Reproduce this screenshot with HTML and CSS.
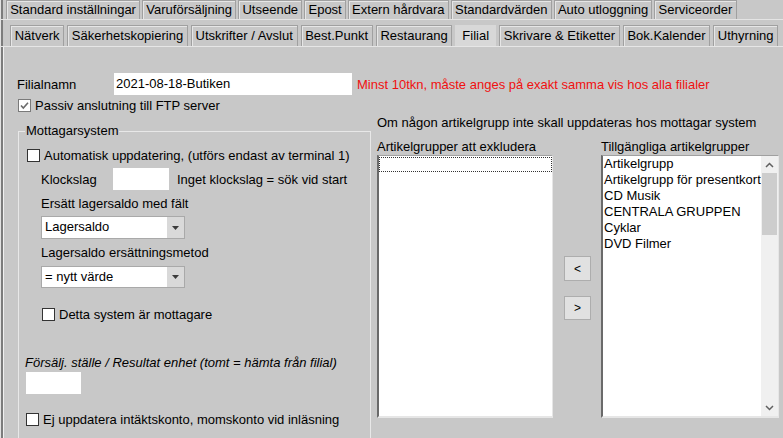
FILE: index.html
```html
<!DOCTYPE html>
<html lang="sv">
<head>
<meta charset="utf-8">
<title>Filial</title>
<link rel="stylesheet" href="styles.css">
</head>
<body>
<div class="frame">
  <div class="tabs tabs1">
    <span class="tab">Standard inställningar</span>
    <span class="tab">Varuförsäljning</span>
    <span class="tab">Utseende</span>
    <span class="tab">Epost</span>
    <span class="tab">Extern hårdvara</span>
    <span class="tab">Standardvärden</span>
    <span class="tab">Auto utloggning</span>
    <span class="tab">Serviceorder</span>
  </div>
  <div class="tabs tabs2">
    <span class="tab">Nätverk</span>
    <span class="tab">Säkerhetskopiering</span>
    <span class="tab">Utskrifter / Avslut</span>
    <span class="tab">Best.Punkt</span>
    <span class="tab">Restaurang</span>
    <span class="tab active">Filial</span>
    <span class="tab">Skrivare &amp; Etiketter</span>
    <span class="tab">Bok.Kalender</span>
    <span class="tab">Uthyrning</span>
  </div>
  <div class="content">
    <div class="name-row">
      <span class="name-label">Filialnamn</span>
      <div class="field name-field">2021-08-18-Butiken</div>
      <span class="warn">Minst 10tkn, måste anges på exakt samma vis hos alla filialer</span>
    </div>
    <div class="main">
      <div class="left">
        <div class="check-row ftp">
          <span class="cb checked"><svg width="11" height="11" viewBox="0 0 11 11"><path d="M2 5.5 L4.3 8 L9 2.8" fill="none" stroke="#6b6b6b" stroke-width="1.6"/></svg></span>
          <span>Passiv anslutning till FTP server</span>
        </div>
        <fieldset class="group">
          <legend>Mottagarsystem</legend>
          <div class="check-row auto">
            <span class="cb"></span>
            <span>Automatisk uppdatering, (utförs endast av terminal 1)</span>
          </div>
          <div class="indent">
            <div class="clock-row">
              <span class="clock-label">Klockslag</span>
              <div class="field clock-field"></div>
              <span>Inget klockslag = sök vid start</span>
            </div>
            <div class="caption cap1">Ersätt lagersaldo med fält</div>
            <div class="select sel1"><span class="select-text">Lagersaldo</span><span class="select-arrow"><svg width="7" height="4" viewBox="0 0 7 4"><path d="M0 0 H7 L3.5 4 Z" fill="#3c3c3c"/></svg></span></div>
            <div class="caption cap2">Lagersaldo ersättningsmetod</div>
            <div class="select sel2"><span class="select-text">= nytt värde</span><span class="select-arrow"><svg width="7" height="4" viewBox="0 0 7 4"><path d="M0 0 H7 L3.5 4 Z" fill="#3c3c3c"/></svg></span></div>
            <div class="check-row receiver">
              <span class="cb"></span>
              <span>Detta system är mottagare</span>
            </div>
          </div>
          <div class="italic-cap">Försälj. ställe / Resultat enhet (tomt = hämta från filial)</div>
          <div class="field unit-field"></div>
          <div class="check-row noupdate">
            <span class="cb"></span>
            <span>Ej uppdatera intäktskonto, momskonto vid inläsning</span>
          </div>
        </fieldset>
      </div>
      <div class="right">
        <div class="hint">Om någon artikelgrupp inte skall uppdateras hos mottagar system</div>
        <div class="lists">
          <div class="list-col">
            <div class="list-label">Artikelgrupper att exkludera</div>
            <div class="listbox">
              <div class="focus-item"></div>
            </div>
          </div>
          <div class="btn-col">
            <button class="btn btn-left" type="button">&lt;</button>
            <button class="btn btn-right" type="button">&gt;</button>
          </div>
          <div class="list-col">
            <div class="list-label">Tillgängliga artikelgrupper</div>
            <div class="listbox avail">
              <ul class="items">
                <li>Artikelgrupp</li>
                <li>Artikelgrupp för presentkort</li>
                <li>CD Musik</li>
                <li>CENTRALA GRUPPEN</li>
                <li>Cyklar</li>
                <li>DVD Filmer</li>
              </ul>
              <div class="scrollbar">
                <span class="sb-arrow"><svg width="9" height="6" viewBox="0 0 9 6"><path d="M1 5 L4.5 1.5 L8 5" fill="none" stroke="#606060" stroke-width="1.5"/></svg></span>
                <span class="sb-thumb"></span>
                <span class="sb-space"></span>
                <span class="sb-arrow"><svg width="9" height="6" viewBox="0 0 9 6"><path d="M1 1 L4.5 4.5 L8 1" fill="none" stroke="#606060" stroke-width="1.5"/></svg></span>
              </div>
            </div>
          </div>
        </div>
      </div>
    </div>
  </div>
</div>
</body>
</html>
```
FILE: styles.css
```css
* { box-sizing: border-box; }

html, body {
  margin: 0;
  padding: 0;
}

body {
  width: 783px;
  height: 438px;
  overflow: hidden;
  background: #c8c8c8;
  font-family: "Liberation Sans", Arial, sans-serif;
  font-size: 13px;
  color: #000;
}

.frame {
  height: 438px;
  display: flex;
  flex-direction: column;
  border-left: 1px solid #e2e2e2;
  box-shadow: inset 2px 0 #7c7c7c;
}

.tabs {
  display: flex;
  white-space: nowrap;
}

.tabs1 {
  height: 20px;
  gap: 2px;
  padding-left: 5px;
  border-bottom: 1px solid #e4e4e4;
}

.tabs2 {
  height: 27px;
  gap: 3px;
  padding-left: 9px;
  padding-top: 5px;
  border-bottom: 1px solid #e6e6e6;
}

.tab {
  display: block;
  padding: 0 3.2px;
  line-height: 18px;
  border: 1px solid #a0a0a0;
  border-bottom: none;
  box-shadow: inset 1px 1px #e6e6e6;
  background: #c8c8c8;
}

.tabs2 .tab {
  line-height: 20px;
  height: 21px;
  padding: 0 3.7px;
}

.tabs2 .tab.active {
  background: #d8d8d8;
  border-color: #d8d8d8;
  box-shadow: none;
  padding: 0 6px;
}

.content {
  flex: 1;
  padding: 26px 0 0 13px;
  border-left: 1px solid #f0f0f0;
  margin-left: 2px;
}

.name-row {
  display: flex;
  align-items: center;
  height: 22px;
}

.name-label {
  width: 97px;
}

.field {
  background: #fff;
  height: 22px;
  line-height: 22px;
}

.name-field {
  width: 238px;
  padding-left: 2px;
}

.warn {
  color: #f01010;
  margin-left: 5px;
}

.main {
  display: flex;
  margin-top: 2px;
}

.left {
  width: 357px;
  flex: none;
}

.check-row {
  display: flex;
  align-items: center;
  height: 16px;
}

.cb {
  width: 13px;
  height: 13px;
  flex: none;
  background: #fff;
  border: 1px solid #333;
  margin-right: 4px;
  display: flex;
  align-items: center;
  justify-content: center;
}

.cb.checked {
  border-color: #7a7a7a;
}

.ftp {
  padding-left: 1px;
}

.group {
  margin: 10px 0 0 1px;
  width: 353px;
  height: 330px;
  padding: 0 0 0 8px;
  border: 1px solid #e8e8e8;
  border-bottom: none;
}

.group legend {
  padding: 0 1px;
  margin-left: -2px;
  line-height: 16px;
}

.auto {
  margin-top: 8px;
}

.indent {
  padding-left: 14px;
}

.clock-row {
  display: flex;
  align-items: center;
  margin-top: 5px;
  height: 22px;
}

.clock-label {
  width: 72px;
}

.clock-field {
  width: 56px;
  margin-right: 8px;
}

.caption {
  line-height: 16px;
  height: 16px;
}

.cap1 {
  margin-top: 6px;
}

.cap2 {
  margin-top: 6px;
}

.select {
  width: 144px;
  background: #fff;
  border: 1px solid #a9a9a9;
  display: flex;
  align-items: stretch;
}

.sel1 {
  height: 23px;
  margin-top: 4px;
}

.sel2 {
  height: 22px;
  margin-top: 5px;
}

.select-text {
  flex: 1;
  line-height: 20px;
  padding-left: 3px;
}

.select-arrow {
  width: 17px;
  background: #d9d9d9;
  display: flex;
  align-items: center;
  justify-content: center;
}

.receiver {
  margin-top: 18px;
  padding-left: 1px;
}

.italic-cap {
  font-style: italic;
  margin-top: 33px;
  margin-left: -2px;
  line-height: 16px;
}

.unit-field {
  width: 55px;
  margin-top: 1px;
  margin-left: -1px;
}

.noupdate {
  margin-top: 17px;
  margin-left: -1px;
}

.right {
  padding-top: 18px;
  margin-left: 3px;
}

.hint {
  line-height: 16px;
}

.lists {
  display: flex;
  margin-top: 8px;
}

.list-label {
  line-height: 16px;
}

.listbox {
  width: 176px;
  height: 263px;
  background: #fff;
  border-top: 1px solid #a0a0a0;
  border-left: 2px solid #6a6a6a;
  border-right: 1px solid #e6e6e6;
  border-bottom: 2px solid #e6e6e6;
}

.focus-item {
  margin: 1px 0 0 0;
  height: 15px;
  border: 1px dotted #333;
}

.btn-col {
  display: flex;
  flex-direction: column;
  margin: 117px 10px 0 11px;
  gap: 15px;
}

.btn {
  width: 27px;
  height: 25px;
  background: #e1e1e1;
  border: 1px solid #adadad;
  font-family: "Liberation Sans", Arial, sans-serif;
  font-size: 12px;
  color: #000;
  padding: 0;
}

.btn-right {
  height: 24px;
}

.avail {
  width: 178px;
  display: flex;
}

.items {
  list-style: none;
  margin: 0;
  padding: 0 0 0 1px;
  flex: 1;
  overflow: hidden;
  white-space: nowrap;
}

.items li {
  line-height: 16px;
  height: 16px;
}

.scrollbar {
  width: 17px;
  flex: none;
  background: #f0f0f0;
  display: flex;
  flex-direction: column;
  align-items: center;
}

.sb-arrow {
  height: 17px;
  display: flex;
  align-items: center;
  justify-content: center;
}

.sb-thumb {
  width: 15px;
  height: 62px;
  background: #cdcdcd;
}

.sb-space {
  flex: 1;
}
```
